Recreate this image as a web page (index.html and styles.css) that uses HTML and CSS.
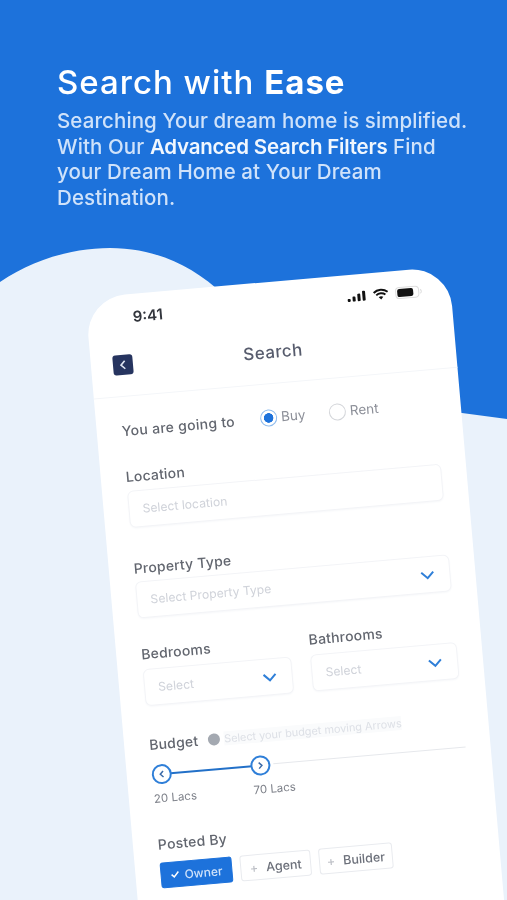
FILE: index.html
```html
<!DOCTYPE html>
<html lang="en">
<head>
<meta charset="utf-8">
<title>Search with Ease</title>
<link rel="stylesheet" href="styles.css">
</head>
<body>
<main class="screen">
  <svg class="wave" viewBox="0 0 507 900" width="507" height="900" aria-hidden="true">
    <path d="M0 282C32 260 72 248 110 248C150 248 186 262 216 288L300 400L462 413L507 419V900H0Z" fill="#eaf2fb"/>
  </svg>
  <header class="hero">
    <h1>Search with <b>Ease</b></h1>
    <p>Searching Your dream home is simplified.<br>With Our <b>Advanced Search Filters</b> Find<br>your Dream Home at Your Dream<br>Destination.</p>
  </header>
  <section class="phone">
    <div class="status">
      <span class="time">9:41</span>
      <span class="status-icons">
        <svg width="21" height="12" viewBox="0 0 20 12"><rect x="1" y="8" width="3" height="3" rx="1"/><rect x="6" y="6" width="3" height="5" rx="1"/><rect x="11" y="3.5" width="3" height="7.5" rx="1"/><rect x="16" y="1" width="3" height="10" rx="1"/></svg>
        <svg width="16" height="12" viewBox="0 0 16 12"><path d="M1 4.2C5 .6 11 .6 15 4.2M3.4 6.7C6 4.5 10 4.5 12.6 6.7" fill="none" stroke="#111" stroke-width="1.9"/><path d="M5.7 8.8C7 7.7 9 7.7 10.300 8.8L8 11.300Z"/></svg>
        <svg width="28" height="13" viewBox="0 0 28 13"><rect x="1" y="1" width="23" height="11" rx="3.500" fill="#fff" stroke="#ddd"/><rect x="2.500" y="2.500" width="16" height="8" rx="2"/><path d="M25.500 4.500C27 5.500 27 7.500 25.500 8.500" fill="none" stroke="#ddd"/></svg>
      </span>
    </div>
    <nav class="nav">
      <span class="back"><svg width="10" height="12" viewBox="0 0 10 12"><path d="M7 2 3 6l4 4" fill="none" stroke="#dfe5f2" stroke-width="1.600"/></svg></span>
      <h2>Search</h2>
    </nav>
    <div class="form">
      <div class="going">
        <span class="going-label">You are going to</span>
        <span class="radio-item buy"><i class="radio on"></i>Buy</span>
        <span class="radio-item"><i class="radio"></i>Rent</span>
      </div>
      <div class="field first">
        <label>Location</label>
        <div class="input">Select location</div>
      </div>
      <div class="field second">
        <label>Property Type</label>
        <div class="input">Select Property Type<svg class="chev" width="16" height="10" viewBox="0 0 16 10"><path d="M2 2l6 6 6-6"/></svg></div>
      </div>
      <div class="two">
        <div class="field">
          <label>Bedrooms</label>
          <div class="input">Select<svg class="chev" width="16" height="10" viewBox="0 0 16 10"><path d="M2 2l6 6 6-6"/></svg></div>
        </div>
        <div class="field">
          <label>Bathrooms</label>
          <div class="input">Select<svg class="chev" width="16" height="10" viewBox="0 0 16 10"><path d="M2 2l6 6 6-6"/></svg></div>
        </div>
      </div>
      <div class="budget-head">
        <label>Budget</label>
        <i class="info"></i>
        <span class="hint">Select your budget moving Arrows</span>
      </div>
      <div class="slider">
        <span class="fill"></span>
        <span class="rest"></span>
        <span class="knob low"><svg width="8" height="10" viewBox="0 0 8 10"><path d="M5.500 2 2.500 5l3 3"/></svg></span>
        <span class="knob high"><svg width="8" height="10" viewBox="0 0 8 10"><path d="M2.500 2l3 3-3 3"/></svg></span>
      </div>
      <div class="range"><span class="lo">20 Lacs</span><span>70 Lacs</span></div>
      <div class="posted">Posted By</div>
      <div class="chips">
        <span class="chip active"><svg width="9" height="8" viewBox="0 0 9 8"><path d="M1 4l2.500 2.500L8 1.500" fill="none" stroke="#fff" stroke-width="1.500"/></svg>Owner</span>
        <span class="chip agent"><em>+</em>Agent</span>
        <span class="chip builder"><em>+</em>Builder</span>
      </div>
    </div>
  </section>
</main>
</body>
</html>
```
FILE: styles.css
```css
* { box-sizing: border-box; }
html, body { margin: 0; padding: 0; }
body { font-family: Inter, "Liberation Sans", sans-serif; background: #1d72db; }
.screen { position: relative; width: 507px; height: 900px; overflow: hidden; background: #1d72db; filter: blur(.6px); }
.wave { position: absolute; left: 0; top: 0; }
.hero { position: relative; padding: 62px 0 0 57px; color: #cfe2fa; }
.hero h1 { margin: 0 0 6px; font-size: 33px; line-height: 40px; font-weight: 500; color: #fff; letter-spacing: 1px; white-space: nowrap; }
.hero h1 b { font-weight: 700; }
.hero p { margin: 0; font-size: 20.500px; line-height: 25.500px; font-weight: 500; letter-spacing: .1px; white-space: nowrap; }
.hero p b { font-weight: 600; color: #f1f7fe; letter-spacing: -.2px; }

.phone { position: absolute; left: 85px; top: 298px; width: 365px; height: 720px; background: #fff; border-radius: 40px; transform: rotate(-5deg); transform-origin: 0 0; color: #5b6070; }
.status { display: flex; justify-content: space-between; align-items: center; height: 16px; margin-top: 14px; padding: 0 28px 0 46px; }
.time { font-size: 15px; font-weight: 600; color: #33363d; }
.status-icons { display: flex; align-items: center; gap: 6px; }
.status-icons svg { display: block; fill: #111; }
.nav { display: grid; grid-template-columns: 1fr; align-items: center; justify-items: center; height: 48px; margin-top: 24px; padding-bottom: 15px; border-bottom: 1px solid #f4f6f9; position: relative; }
.nav h2 { margin: 0; font-size: 17px; font-weight: 500; color: #575c6d; letter-spacing: .4px; }
.back { position: absolute; left: 22px; top: 6px; width: 20px; height: 20px; border-radius: 3px; background: #26345f; display: flex; align-items: center; justify-content: center; }
.back svg { display: block; }
.form { padding: 0 25px; }
.going { display: flex; align-items: center; height: 20px; margin-top: 23px; font-size: 14px; }
.going-label { width: 139px; font-weight: 500; color: #62666f; letter-spacing: .3px; white-space: nowrap; }
.radio-item { display: flex; align-items: center; gap: 4px; color: #8c8f98; font-size: 13.500px; }
.radio-item.buy { width: 69px; }
.radio { width: 17px; height: 17px; border-radius: 50%; border: 1.500px solid #d4d6da; background: #fff; display: block; }
.radio.on { border-color: #8fbcee; background: radial-gradient(circle, #1d72db 0 4.500px, #fff 5px); }
.field { display: flex; flex-direction: column; gap: 7px; margin-top: 0; }
.field.first { margin-top: 29px; gap: 6px; }
.field.second { margin-top: 33px; gap: 5px; }
.field label, .budget-head label, .posted { font-size: 14px; line-height: 16px; font-weight: 500; color: #62666f; letter-spacing: .2px; }
.input { display: flex; align-items: center; justify-content: space-between; height: 37px; padding: 0 14px 0 13px; border: 1px solid #f3f4f7; border-radius: 6px; font-size: 12.200px; color: #d0d3da; background: #fff; box-shadow: 0 1px 2px #f7f8fa; }
.chev { display: block; fill: none; stroke: #2f7fd8; stroke-width: 2; }
.two { display: grid; grid-template-columns: 149px 147px; column-gap: 19px; margin-top: 28px; }
.budget-head { display: flex; align-items: center; margin-top: 31px; height: 16px; }
.info { width: 12px; height: 12px; border-radius: 50%; background: #a4a9b1; margin: 0 4px 0 10px; }
.hint { font-size: 10.900px; color: #dde0e6; white-space: nowrap; background: #fafbfc; }
.slider { position: relative; height: 24px; margin-top: 10px; }
.rest { position: absolute; left: 122px; right: 0; top: 11px; height: 1px; background: #e6e8ec; }
.fill { position: absolute; left: 10px; width: 100px; top: 11px; height: 2px; background: #2270c8; }
.knob { position: absolute; top: 2px; width: 20px; height: 20px; border: 2px solid #2f7fd8; border-radius: 50%; background: #fff; display: flex; align-items: center; justify-content: center; }
.knob svg { display: block; fill: none; stroke: #3b6aa8; stroke-width: 1.500; }
.knob.low { left: 0; }
.knob.high { left: 99px; }
.range { display: flex; height: 16px; margin-top: 4px; font-size: 11.500px; line-height: 16px; color: #7d8089; white-space: nowrap; }
.range .lo { width: 100px; }
.posted { margin-top: 30px; }
.chips { display: flex; margin-top: 10px; }
.chip { display: flex; align-items: center; justify-content: center; height: 26px; border: 1px solid #e9ebef; border-radius: 3px; font-size: 12.500px; font-weight: 500; color: #6c707a; }
.chip em { font-style: normal; font-weight: 400; color: #b6b9c0; margin-right: 8px; }
.chip.active { width: 72px; gap: 5px; background: #1d72db; border-color: #1d72db; color: #cfe2fa; margin-right: 8px; font-size: 12px; }
.chip.agent { width: 71px; margin-right: 8px; }
.chip.builder { width: 74px; }
```
